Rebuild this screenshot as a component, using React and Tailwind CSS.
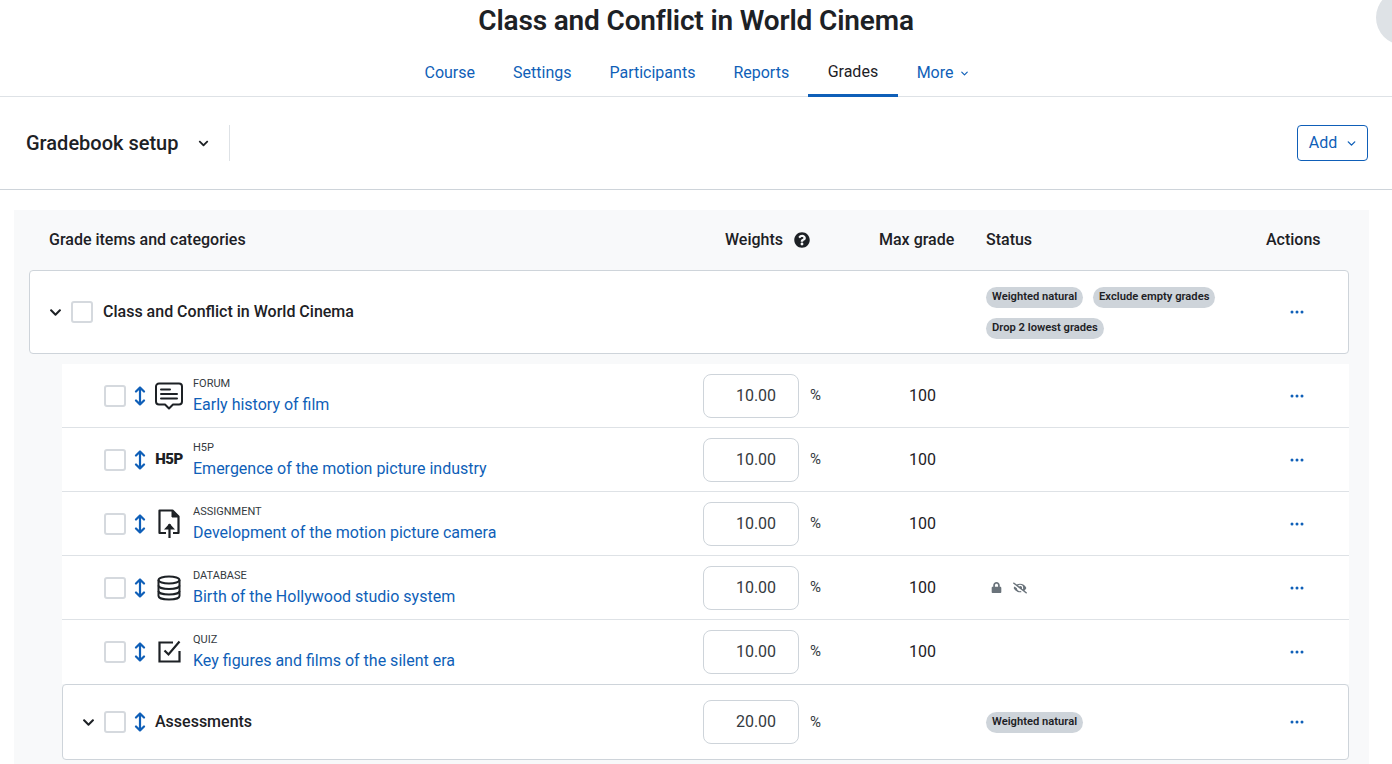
import React from "react";
import { FaChevronDown, FaEyeSlash, FaLock, FaQuestionCircle } from "react-icons/fa";
import { ChevronDown } from "lucide-react";

const ForumIcon = () => (
  <svg width="28" height="28" viewBox="0 0 28 28" fill="none" stroke="#1d2125" strokeWidth="2" strokeLinejoin="round" strokeLinecap="round">
    <path d="M4 1.500h20a3 3 0 0 1 3 3v15a3 3 0 0 1-3 3h-6l-4 4-4-4h-6a3 3 0 0 1-3-3v-15a3 3 0 0 1 3-3z" />
    <path d="M6 7.500h9M6 12h16M6 16.500h16" />
  </svg>
);

const AssignIcon = () => (
  <svg width="22" height="30" viewBox="0 0 22 30" fill="none" stroke="#1d2125" strokeWidth="2.200">
    <path d="M8 24H1.500V1.500h13l6 6V24H15" strokeLinejoin="round" />
    <path d="M14 2v6h6" fill="#1d2125" strokeWidth="1" />
    <path d="M11.500 29V15" />
    <path d="M6 20.500l5.500-6 5.500 6z" fill="#1d2125" stroke="none" />
  </svg>
);

const DatabaseIcon = () => (
  <svg width="24" height="26" viewBox="0 0 24 26" fill="none" stroke="#1d2125" strokeWidth="2">
    <ellipse cx="12" cy="5" rx="10.500" ry="3.500" />
    <path d="M1.500 5v16c0 2 4.700 3.500 10.500 3.500s10.500-1.500 10.500-3.500V5" />
    <path d="M1.500 10.500c0 2 4.700 3.500 10.500 3.500s10.500-1.500 10.500-3.500" />
    <path d="M1.500 16c0 2 4.700 3.500 10.500 3.500s10.500-1.500 10.500-3.500" />
  </svg>
);

const QuizIcon = () => (
  <svg width="23" height="23" viewBox="0 0 23 23" fill="none" stroke="#1d2125" strokeWidth="2.200">
    <path d="M15 2.500H1.500v19h20V11" />
    <path d="M6.500 10.500l4 4L21.500 1.500" />
  </svg>
);

const MoveArrow = () => (
  <svg width="12" height="20" viewBox="0 0 12 20" fill="none" stroke="#0f5fb8" strokeWidth="2.200" strokeLinecap="round" strokeLinejoin="round">
    <path d="M6 1.500v17M2 5.500l4-4 4 4M2 14.500l4 4 4-4" />
  </svg>
);

const Checkbox = () => (
  <span className="block w-[22px] h-[22px] shrink-0 rounded-[3px] border-2 border-[#d5d9de] bg-white" />
);

const Dots = () => (
  <svg width="14" height="4" viewBox="0 0 14 4" fill="#0f5fb8" className="block mx-auto">
    <circle cx="2" cy="2" r="1.500" />
    <circle cx="7" cy="2" r="1.500" />
    <circle cx="12" cy="2" r="1.500" />
  </svg>
);

const Badge = ({ children }) => (
  <span className="inline-flex items-center h-[21px] px-[6px] rounded-full bg-[#ced4da] text-[11.2px] font-semibold text-[#1d2125] whitespace-nowrap">
    {children}
  </span>
);

const WeightInput = ({ value }) => (
  <div className="flex items-center">
    <div className="w-[96px] h-[44px] pl-[10px] rounded-lg border border-[#ced4da] bg-white flex items-center justify-center text-base text-[#343a40]">
      {value}
    </div>
    <span className="ml-[11px] text-[15px] text-[#343a40]">%</span>
  </div>
);

const items = [
  { type: "FORUM", name: "Early history of film", icon: <ForumIcon /> },
  {
    type: "H5P",
    name: "Emergence of the motion picture industry",
    icon: <span className="text-[15px] font-black tracking-[-0.5px] text-[#1d2125]">H5P</span>,
  },
  { type: "ASSIGNMENT", name: "Development of the motion picture camera", icon: <AssignIcon /> },
  { type: "DATABASE", name: "Birth of the Hollywood studio system", icon: <DatabaseIcon />, locked: true },
  { type: "QUIZ", name: "Key figures and films of the silent era", icon: <QuizIcon /> },
];

const tabs = ["Course", "Settings", "Participants", "Reports"];

export default function App() {
  return (
    <div className="relative h-[764px] overflow-hidden bg-white text-[#1d2125] font-['Roboto',sans-serif]">
      {/* avatar peeking in at the corner */}
      <div className="absolute left-[1376px] top-[-10px] w-[55px] h-[55px] rounded-full bg-[#dee2e6]" />

      {/* Title + tabs */}
      <h1 className="pt-[3px] h-[49px] text-center text-[28px] leading-[36px] font-semibold tracking-[-0.15px]">
        Class and Conflict in World Cinema
      </h1>
      <nav className="h-[48px] border-b border-[#dee2e6] flex pl-[405.5px]">
        {tabs.map((t) => (
          <a key={t} className="px-[19px] pt-[12px] text-base text-[#0f5fb8]">{t}</a>
        ))}
        <a className="h-[48px] px-[19.5px] pt-[11px] text-base text-[#1d2125] border-b-[3px] border-[#0f5fb8]">Grades</a>
        <a className="pl-[19px] pt-[12px] text-base text-[#0f5fb8] flex items-start gap-[5px]">
          More <ChevronDown size={11} strokeWidth={2.5} className="mt-[7px]" />
        </a>
      </nav>

      {/* Page action bar */}
      <div className="h-[93px] border-b border-[#ced4da] pl-[26px] pr-[24px] flex items-center justify-between">
        <div className="flex items-center h-[36px]">
          <span className="text-xl font-medium">Gradebook setup</span>
          <FaChevronDown size={11} className="ml-[20px] mr-[20px]" />
          <span className="w-px h-[36px] bg-[#dee2e6]" />
        </div>
        <button className="w-[71px] h-[36px] rounded border border-[#0f5fb8] text-base text-[#0f5fb8] flex items-center justify-center gap-[8px] pl-[2px]">
          Add <ChevronDown size={13} strokeWidth={2.5} />
        </button>
      </div>

      {/* Grade table */}
      <div className="mt-[20px] ml-[14px] mr-[23px] bg-[#f8f9fa] pl-[15px] pr-[20px] h-[560px]">
        <div className="h-[60px] grid grid-cols-[676px_154px_107px_280px_auto] items-center text-base font-medium pl-[20px]">
          <span>Grade items and categories</span>
          <span className="flex items-center gap-[11px]">
            Weights <FaQuestionCircle size={16} />
          </span>
          <span>Max grade</span>
          <span>Status</span>
          <span>Actions</span>
        </div>

        <div className="h-[84px] rounded border border-[#ced4da] bg-white flex items-center pl-[19px]">
          <FaChevronDown size={13} className="shrink-0" />
          <span className="ml-[9px]"><Checkbox /></span>
          <span className="ml-[10px] w-[883px] shrink-0 text-base font-medium">Class and Conflict in World Cinema</span>
          <div className="w-[275px] shrink-0 pt-[1px] flex flex-wrap gap-[10px]">
            <Badge>Weighted natural</Badge>
            <Badge>Exclude empty grades</Badge>
            <Badge>Drop 2 lowest grades</Badge>
          </div>
          <div className="w-[16px] ml-[28px]"><Dots /></div>
        </div>

        <div className="mt-[10px] ml-[33px] bg-white">
          {items.map((item, i) => (
            <div
              key={item.type}
              className={`h-[64px] flex items-center pl-[42px] border-b ${i < items.length - 1 ? "border-[#dee2e6]" : "border-transparent"}`}
            >
              <Checkbox />
              <span className="ml-[8px] w-[12px] shrink-0"><MoveArrow /></span>
              <span className="ml-[8px] w-[30px] shrink-0 flex justify-center">{item.icon}</span>
              <div className="ml-[9px] pt-[2px] w-[510px] shrink-0 flex flex-col">
                <span className="text-[11px] leading-[12px] text-[#343a40]">{item.type}</span>
                <span className="mt-[5px] text-base leading-[20px] text-[#0f5fb8]">{item.name}</span>
              </div>
              <div className="w-[206px] shrink-0"><WeightInput value="10.00" /></div>
              <span className="w-[77px] shrink-0 text-base">100</span>
              <div className="w-[303px] shrink-0 pl-[5px] flex items-center gap-[11px] text-[#6a737b]">
                {item.locked && (
                  <>
                    <FaLock size={11} />
                    <FaEyeSlash size={14} />
                  </>
                )}
              </div>
              <div className="w-[16px]"><Dots /></div>
            </div>
          ))}
        </div>

        <div className="ml-[33px] h-[76px] rounded border border-[#ced4da] bg-white flex items-center pl-[19px]">
          <FaChevronDown size={13} className="shrink-0" />
          <span className="ml-[9px]"><Checkbox /></span>
          <span className="ml-[8px] w-[12px] shrink-0"><MoveArrow /></span>
          <span className="ml-[9px] w-[548px] shrink-0 text-base font-medium">Assessments</span>
          <div className="w-[283px] shrink-0"><WeightInput value="20.00" /></div>
          <div className="w-[303px] shrink-0 flex"><Badge>Weighted natural</Badge></div>
          <div className="w-[16px]"><Dots /></div>
        </div>
      </div>
    </div>
  );
}
